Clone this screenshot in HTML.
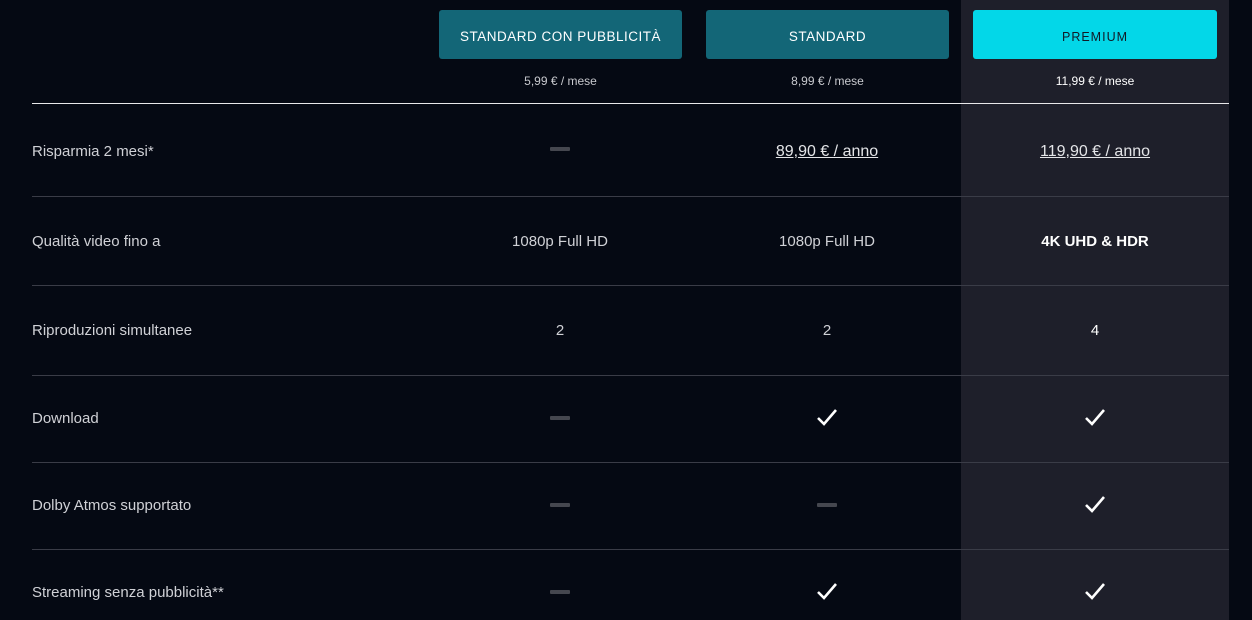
<!DOCTYPE html>
<html><head><meta charset="utf-8"><style>
*{margin:0;padding:0;box-sizing:border-box}
body{width:1252px;height:620px;background:#050913;font-family:"Liberation Sans",sans-serif;position:relative;overflow:hidden;color:#d2d3d8}
.prem{position:absolute;left:961px;top:0;width:268px;height:620px;background:#1e1f2a}
.btn{position:absolute;top:10px;height:49px;border-radius:3px;background:#136677;color:#fff;font-size:13.5px;letter-spacing:0.5px;display:flex;align-items:center;justify-content:center;padding-top:4px}
.price{position:absolute;top:74px;font-size:12px;text-align:center;color:#c8c9ce}
.hl{position:absolute;left:32px;width:1197px;height:1px;background:#3a3c47}
.lab{position:absolute;left:32px;font-size:15px;color:#d0d1d6}
.c{position:absolute;width:240px;text-align:center;font-size:15px;color:#d0d1d6}
.dash{position:absolute;width:20px;height:4px;border-radius:1px;background:#45474f}
.chk{position:absolute;width:22px;height:18px}
</style></head><body>
<div class="prem"></div>
<div class="btn" style="left:439px;width:243px">STANDARD CON PUBBLICITÀ</div>
<div class="btn" style="left:706px;width:243px">STANDARD</div>
<div class="btn" style="left:973px;width:244px;background:#03d7e8;color:#111a26;font-size:12.5px;letter-spacing:1px">PREMIUM</div>
<div class="price" style="left:440px;width:241px">5,99 € / mese</div>
<div class="price" style="left:707px;width:241px">8,99 € / mese</div>
<div class="price" style="left:974px;width:242px;color:#fff">11,99 € / mese</div>
<div class="hl" style="top:103px;background:#e8e8ea"></div>
<div class="hl" style="top:196px"></div>
<div class="hl" style="top:285px"></div>
<div class="hl" style="top:375px"></div>
<div class="hl" style="top:462px"></div>
<div class="hl" style="top:549px"></div>

<div class="lab" style="top:143px">Risparmia 2 mesi*</div>
<div class="lab" style="top:233px">Qualità video fino a</div>
<div class="lab" style="top:322px">Riproduzioni simultanee</div>
<div class="lab" style="top:410px">Download</div>
<div class="lab" style="top:497px">Dolby Atmos supportato</div>
<div class="lab" style="top:584px">Streaming senza pubblicità**</div>

<div class="dash" style="left:550px;top:147px"></div>
<div class="c" style="left:707px;top:143px;font-size:16px;text-decoration:underline;color:#e4e5e8">89,90 € / anno</div>
<div class="c" style="left:975px;top:143px;font-size:16px;text-decoration:underline;color:#e4e5e8">119,90 € / anno</div>

<div class="c" style="left:440px;top:233px">1080p Full HD</div>
<div class="c" style="left:707px;top:233px">1080p Full HD</div>
<div class="c" style="left:975px;top:233px;color:#fff;font-weight:bold">4K UHD &amp; HDR</div>

<div class="c" style="left:440px;top:322px">2</div>
<div class="c" style="left:707px;top:322px">2</div>
<div class="c" style="left:975px;top:322px;color:#fff">4</div>

<div class="dash" style="left:550px;top:416px"></div>
<svg class="chk" style="left:816px;top:408px" viewBox="0 0 22 18"><path d="M2 10l6 6L20 2" fill="none" stroke="#fff" stroke-width="2.6"/></svg>
<svg class="chk" style="left:1084px;top:408px" viewBox="0 0 22 18"><path d="M2 10l6 6L20 2" fill="none" stroke="#fff" stroke-width="2.6"/></svg>

<div class="dash" style="left:550px;top:503px"></div>
<div class="dash" style="left:817px;top:503px"></div>
<svg class="chk" style="left:1084px;top:495px" viewBox="0 0 22 18"><path d="M2 10l6 6L20 2" fill="none" stroke="#fff" stroke-width="2.6"/></svg>

<div class="dash" style="left:550px;top:590px"></div>
<svg class="chk" style="left:816px;top:582px" viewBox="0 0 22 18"><path d="M2 10l6 6L20 2" fill="none" stroke="#fff" stroke-width="2.6"/></svg>
<svg class="chk" style="left:1084px;top:582px" viewBox="0 0 22 18"><path d="M2 10l6 6L20 2" fill="none" stroke="#fff" stroke-width="2.6"/></svg>
</body></html>
